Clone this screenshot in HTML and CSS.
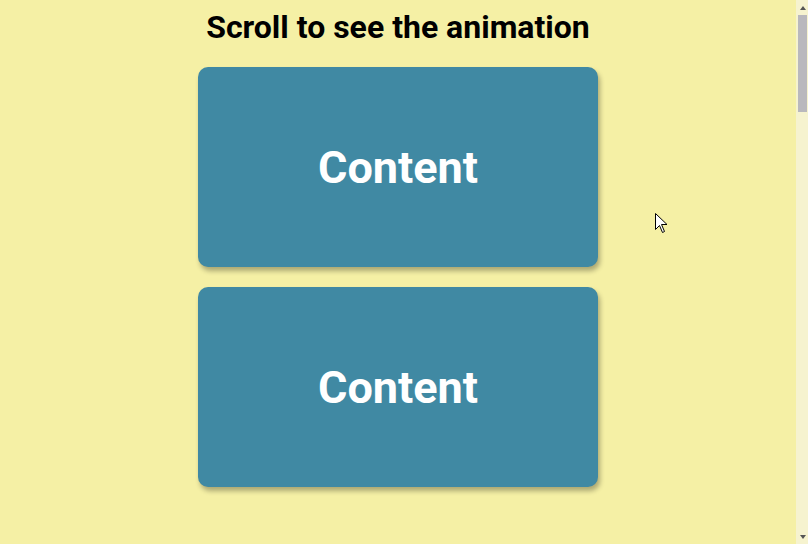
FILE: index.html
```html
<!DOCTYPE html>
<html lang="en">

<head>
    <meta charset="UTF-8">
    <meta name="viewport" content="width=device-width, initial-scale=1.0">
    <title>Scroll animation</title>
    <link rel="stylesheet" href="styles.css">
</head>

<body>
    <main class="page">
        <h1>Scroll to see the animation</h1>

        <div class="box"><h2>Content</h2></div>
        <div class="box"><h2>Content</h2></div>
    </main>

    <div class="scrollbar">
        <span class="arrow up"></span>
        <span class="thumb"></span>
        <span class="spacer"></span>
        <span class="arrow down"></span>
    </div>

    <svg class="cursor" width="13" height="21" viewBox="0 0 13 21">
        <path d="M0.5 0.5 L0.5 16.5 L4.5 12.5 L7.5 19.5 L9.5 18.5 L6.5 11.5 L12 11.5 Z" fill="#fff" stroke="#000" stroke-width="1" />
    </svg>
</body>

</html>
```

FILE: styles.css
```css
* {
    box-sizing: border-box;
}

html,
body {
    height: 100%;
    overflow: hidden;
}

body {
    margin: 0;
    display: flex;
    background-color: #f5f0a5;
    font-family: Roboto, "Liberation Sans", sans-serif;
}

.page {
    flex: 1;
    display: flex;
    flex-direction: column;
    align-items: center;
    padding-top: 8px;
}

h1 {
    margin: 0 0 21px;
    font-size: 32px;
}

.box {
    width: 400px;
    height: 200px;
    margin-bottom: 20px;
    display: flex;
    align-items: center;
    justify-content: center;
    background-color: #4089a3;
    color: white;
    border-radius: 10px;
    box-shadow: 2px 4px 5px rgba(0, 0, 0, 0.3);
}

.box h2 {
    margin: 0;
    font-size: 45px;
}

/* fake scrollbar like in the capture */
.scrollbar {
    width: 12px;
    padding-left: 2px;
    display: flex;
    flex-direction: column;
    align-items: flex-start;
    background-color: #f6f3cf;
}

.arrow {
    width: 9px;
    height: 15px;
    display: flex;
    align-items: center;
    justify-content: center;
}

.arrow::before {
    content: "";
    border-left: 3px solid transparent;
    border-right: 3px solid transparent;
}

.arrow.up::before {
    border-bottom: 4px solid #555;
}

.arrow.down::before {
    border-top: 4px solid #555;
}

.thumb {
    width: 9px;
    height: 97px;
    background-color: #b9b8bd;
}

.spacer {
    flex: 1;
}

.cursor {
    position: fixed;
    left: 655px;
    top: 213px;
}
```
